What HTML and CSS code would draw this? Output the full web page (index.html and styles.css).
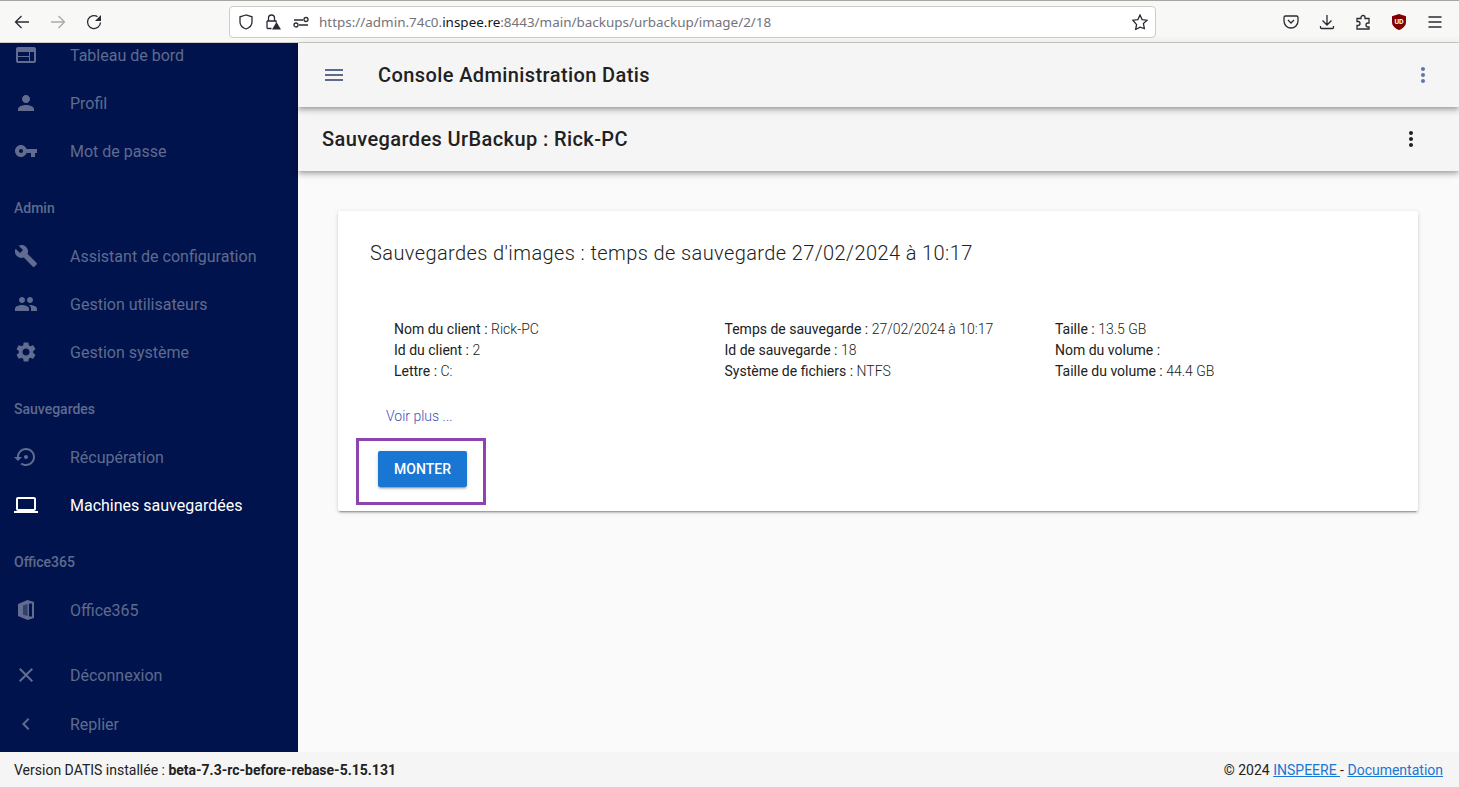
FILE: index.html
```html
<!doctype html>
<html lang="fr">
<head>
  <meta charset="UTF-8">
  <meta name="viewport" content="width=device-width, initial-scale=1">
  <title>Console Administration Datis</title>

  <link rel="stylesheet" href="styles.css">
</head>
<body>

<header class="browser">
  <svg class="bicon" viewBox="0 0 16 16"><path d="M15 8H1.500M7.500 2 1.500 8l6 6"/></svg>
  <svg class="bicon muted" viewBox="0 0 16 16"><path d="M1 8h13.500M8.500 2l6 6-6 6"/></svg>
  <svg class="bicon" viewBox="0 0 16 16"><path d="M14.500 8.500A6.500 6.500 0 1 1 11.500 2.600"/><path class="solid" d="M15 1v6H9z"/></svg>

  <div class="urlbar">
    <svg class="bicon" viewBox="0 0 16 16"><path d="M8 1 2 2.800V8c0 3.400 2.600 5.800 6 7 3.400-1.200 6-3.600 6-7V2.800z"/></svg>
    <svg class="bicon lock" viewBox="0 0 16 16"><path d="M3.500 7V4a3 3 0 0 1 6 0v3M2 7h9v1.500M6.500 14.500H3a1 1 0 0 1-1-1V7"/><path class="solid" d="M11.500 8 16 15.500H7z"/></svg>
    <svg class="bicon tune" viewBox="0 0 16 16"><path d="M1 6h9M6 11h9"/><circle cx="13" cy="5.500" r="2"/><circle cx="3" cy="11" r="2"/></svg>
    <span class="url">https://admin.74c0.<b>inspee.re</b>:8443/main/backups/urbackup/image/2/18</span>
    <svg class="bicon star" viewBox="0 0 16 16"><path d="m8 1 2.100 4.600 5 .6-3.700 3.400 1 4.900L8 13.100l-4.400 2.400 1-4.900L.9 6.200l5-.6z"/></svg>
  </div>

  <svg class="bicon" viewBox="0 0 16 16"><path d="M2.500 2h11A1.500 1.500 0 0 1 15 3.500V7a7 7 0 0 1-14 0V3.500A1.500 1.500 0 0 1 2.500 2zM5 6l3 3 3-3"/></svg>
  <svg class="bicon" viewBox="0 0 16 16"><path d="M8 1v10M3.500 6.500 8 11l4.500-4.500M1.500 12v1.500a1 1 0 0 0 1 1h11a1 1 0 0 0 1-1V12"/></svg>
  <svg class="bicon" viewBox="0 0 16 16"><path d="M6 3.500a2 2 0 1 1 4 0v1h4V9h-1a2 2 0 1 0 0 4h1v2H2v-3.500h1a2 2 0 1 0 0-4H2v-3h4z"/></svg>
  <svg class="bicon ublock" viewBox="0 0 16 16"><path d="M8 0 15 2.200V8c0 3.800-3 6.500-7 8-4-1.500-7-4.200-7-8V2.200z"/><text x="8" y="10">UD</text></svg>
  <svg class="bicon" viewBox="0 0 16 16"><path d="M1.500 3h13M1.500 8h13M1.500 13h13"/></svg>
</header>

<div class="app">
  <nav class="sidebar">
    <div class="sidebar-inner">
      <a class="item"><svg class="micon" viewBox="0 0 24 24"><path d="M20 4H4c-1.100 0-1.990.9-1.990 2L2 18c0 1.100.9 2 2 2h16c1.100 0 2-.9 2-2V6c0-1.100-.9-2-2-2zm-5 14H4v-4h11v4zm0-5H4V9h11v4zm5 5h-4V9h4v9z"/></svg>Tableau de bord</a>
      <a class="item"><svg class="micon" viewBox="0 0 24 24"><path d="M12 12c2.210 0 4-1.790 4-4s-1.790-4-4-4-4 1.790-4 4 1.790 4 4 4zm0 2c-2.670 0-8 1.340-8 4v2h16v-2c0-2.660-5.330-4-8-4z"/></svg>Profil</a>
      <a class="item"><svg class="micon" viewBox="0 0 24 24"><path d="M12.650 10C11.830 7.670 9.610 6 7 6c-3.310 0-6 2.690-6 6s2.690 6 6 6c2.610 0 4.830-1.670 5.650-4H17v4h4v-4h2v-4H12.650zM7 14c-1.100 0-2-.9-2-2s.9-2 2-2 2 .9 2 2-.9 2-2 2z"/></svg>Mot de passe</a>

      <div class="subheader">Admin</div>
      <a class="item"><svg class="micon" viewBox="0 0 24 24"><path d="M22.700 19l-9.100-9.100c.9-2.300.4-5-1.500-6.900-2-2-5-2.400-7.400-1.300L9 6 6 9 1.600 4.700C.4 7.100.9 10.100 2.900 12.100c1.900 1.900 4.600 2.400 6.900 1.500l9.100 9.100c.4.400 1 .4 1.400 0l2.300-2.300c.5-.4.5-1.100.1-1.400z"/></svg>Assistant de configuration</a>
      <a class="item"><svg class="micon" viewBox="0 0 24 24"><path d="M16 11c1.660 0 2.990-1.340 2.990-3S17.660 5 16 5c-1.660 0-3 1.340-3 3s1.340 3 3 3zm-8 0c1.660 0 2.990-1.340 2.990-3S9.660 5 8 5C6.340 5 5 6.340 5 8s1.340 3 3 3zm0 2c-2.330 0-7 1.170-7 3.500V19h14v-2.500c0-2.330-4.670-3.500-7-3.500zm8 0c-.29 0-.62.02-.97.05 1.160.84 1.970 1.970 1.970 3.450V19h6v-2.500c0-2.330-4.670-3.500-7-3.500z"/></svg>Gestion utilisateurs</a>
      <a class="item"><svg class="micon" viewBox="0 0 24 24"><path d="M19.140 12.940c.04-.3.06-.61.06-.94 0-.32-.02-.64-.07-.94l2.030-1.580c.18-.14.23-.41.12-.61l-1.920-3.320c-.12-.22-.37-.29-.59-.22l-2.390.96c-.5-.38-1.030-.7-1.620-.94l-.36-2.540c-.04-.24-.24-.41-.48-.41h-3.840c-.24 0-.43.17-.47.41l-.36 2.540c-.59.24-1.130.57-1.620.94l-2.390-.96c-.22-.08-.47 0-.59.22L2.740 8.870c-.12.21-.08.47.12.61l2.030 1.580c-.05.3-.09.63-.09.94s.02.64.07.94l-2.030 1.580c-.18.14-.23.41-.12.61l1.920 3.320c.12.22.37.29.59.22l2.390-.96c.5.38 1.030.7 1.620.94l.36 2.540c.05.24.24.41.48.41h3.840c.24 0 .44-.17.47-.41l.36-2.540c.59-.24 1.130-.56 1.620-.94l2.390.96c.22.08.47 0 .59-.22l1.920-3.320c.12-.22.07-.47-.12-.61l-2.010-1.580zM12 15.600c-1.980 0-3.600-1.620-3.600-3.600s1.620-3.600 3.600-3.600 3.600 1.620 3.600 3.600-1.620 3.600-3.600 3.600z"/></svg>Gestion système</a>

      <div class="subheader">Sauvegardes</div>
      <a class="item"><svg class="micon" viewBox="0 0 24 24"><path d="M14 12c0-1.100-.9-2-2-2s-2 .9-2 2 .9 2 2 2 2-.9 2-2zm-2-9c-4.970 0-9 4.030-9 9H0l4 4 4-4H5c0-3.870 3.130-7 7-7s7 3.130 7 7-3.130 7-7 7c-1.510 0-2.910-.49-4.060-1.300l-1.420 1.440C8.040 20.300 9.940 21 12 21c4.970 0 9-4.030 9-9s-4.030-9-9-9z"/></svg>Récupération</a>
      <a class="item active"><svg class="micon" viewBox="0 0 24 24"><path d="M20 18c1.100 0 1.990-.9 1.990-2L22 6c0-1.100-.9-2-2-2H4c-1.100 0-2 .9-2 2v10c0 1.100.9 2 2 2H0v2h24v-2h-4zM4 6h16v10H4V6z"/></svg>Machines sauvegardées</a>

      <div class="subheader">Office365</div>
      <a class="item"><svg class="micon" viewBox="0 0 24 24"><path fill-rule="evenodd" d="M13.500 2 4 6v12l9.500 4 6.500-2V4zM15 5.500h3v13h-3zM9 7.500l4.500-1.500v12L9 16.500z"/><path opacity=".5" d="M9 7.500l4.500-1.500v12L9 16.500z"/></svg>Office365</a>

      <a class="item logout"><svg class="micon" viewBox="0 0 24 24"><path d="M19 6.410L17.590 5 12 10.590 6.410 5 5 6.410 10.590 12 5 17.590 6.410 19 12 13.410 17.590 19 19 17.590 13.410 12z"/></svg>Déconnexion</a>
      <a class="item fold"><svg class="micon" viewBox="0 0 24 24"><path d="M15.410 7.410L14 6l-6 6 6 6 1.410-1.410L10.830 12z"/></svg>Replier</a>
    </div>
  </nav>

  <main class="content">
    <div class="toolbar">
      <svg class="micon menu" viewBox="0 0 24 24"><path d="M3 18h18v-2H3v2zm0-5h18v-2H3v2zm0-7v2h18V6H3z"/></svg>
      <h1>Console Administration Datis</h1>
      <svg class="micon more" viewBox="0 0 24 24"><path d="M12 8c1.100 0 2-.9 2-2s-.9-2-2-2-2 .9-2 2 .9 2 2 2zm0 2c-1.100 0-2 .9-2 2s.9 2 2 2 2-.9 2-2-.9-2-2-2zm0 6c-1.100 0-2 .9-2 2s.9 2 2 2 2-.9 2-2-.9-2-2-2z"/></svg>
    </div>

    <div class="pagehead">
      <h2>Sauvegardes UrBackup : Rick-PC</h2>
      <svg class="micon more" viewBox="0 0 24 24"><path d="M12 8c1.100 0 2-.9 2-2s-.9-2-2-2-2 .9-2 2 .9 2 2 2zm0 2c-1.100 0-2 .9-2 2s.9 2 2 2 2-.9 2-2-.9-2-2-2zm0 6c-1.100 0-2 .9-2 2s.9 2 2 2 2-.9 2-2-.9-2-2-2z"/></svg>
    </div>

    <section class="card">
      <h3>Sauvegardes d'images : temps de sauvegarde 27/02/2024 à 10:17</h3>

      <div class="infos">
        <div>
          <p>Nom du client : <span>Rick-PC</span></p>
          <p>Id du client : <span>2</span></p>
          <p>Lettre : <span>C:</span></p>
        </div>
        <div>
          <p>Temps de sauvegarde : <span>27/02/2024 à 10:17</span></p>
          <p>Id de sauvegarde : <span>18</span></p>
          <p>Système de fichiers : <span>NTFS</span></p>
        </div>
        <div>
          <p>Taille : <span>13.5 GB</span></p>
          <p>Nom du volume : <span></span></p>
          <p>Taille du volume : <span>44.4 GB</span></p>
        </div>
      </div>

      <a class="more-link">Voir plus ...</a>

      <div class="highlight">
        <button type="button">MONTER</button>
      </div>
    </section>
  </main>
</div>

<footer class="footer">
  <div>Version DATIS installée : <b>beta-7.3-rc-before-rebase-5.15.131</b></div>
  <div>© 2024 <a>INSPEERE </a> - <a>Documentation</a></div>
</footer>

</body>
</html>
```

FILE: styles.css
```css
* {
    margin: 0;
    padding: 0;
    box-sizing: border-box;
}

html, body {
    height: 100%;
}

body {
    display: flex;
    flex-direction: column;
    overflow: hidden;
    font-family: Roboto, sans-serif;
    font-size: 14px;
    color: #212121;
    background-color: #fafafa;
}

/* browser chrome */

.browser {
    height: 43px;
    flex: none;
    display: flex;
    align-items: center;
    gap: 20px;
    padding: 1px 16px 0 14px;
    background-color: #f8f8f7;
    border-top: 1px solid #a9a5a2;
    border-bottom: 1px solid #cfcdca;
}

.bicon {
    width: 16px;
    height: 16px;
    flex: none;
    fill: none;
    stroke: #2b2a33;
    stroke-width: 1.3;
}

.bicon.muted {
    stroke: #a9a9ad;
}

.bicon .solid {
    fill: #2b2a33;
    stroke: none;
}

.bicon.ublock path {
    fill: #800000;
    stroke: none;
}

.bicon.ublock text {
    fill: #fff;
    stroke: none;
    font-size: 7px;
    font-weight: 700;
    text-anchor: middle;
}

.urlbar {
    width: 927px;
    height: 32px;
    margin: 0 107px;
    flex: none;
    display: flex;
    align-items: center;
    padding: 0 7px 0 8px;
    background-color: #fff;
    border: 1px solid #cfcdca;
    border-radius: 4px;
}

.urlbar .lock {
    margin-left: 11px;
}

.urlbar .tune {
    margin-left: 12px;
}

.url {
    flex: 1;
    margin-left: 10px;
    font-family: "Noto Sans", sans-serif;
    font-size: 13.45px;
    color: #73737a;
}

.url b {
    font-weight: 400;
    color: #15141a;
}

/* app layout */

.app {
    flex: 1;
    min-height: 0;
    display: flex;
}

.sidebar {
    width: 298px;
    flex: none;
    overflow: hidden;
    background-color: #00134c;
    color: rgba(255, 255, 255, .38);
}

.sidebar-inner {
    margin-top: -12px;
}

.item {
    height: 48px;
    display: flex;
    align-items: center;
    gap: 32px;
    padding-left: 14px;
    font-size: 16px;
    white-space: nowrap;
}

.item.active {
    color: #fff;
}

.item.logout {
    margin-top: 17px;
}

.item.fold {
    margin-top: 1px;
}

.subheader {
    height: 48px;
    margin-top: 9px;
    display: flex;
    align-items: center;
    padding-left: 14px;
    font-weight: 500;
}

.micon {
    width: 24px;
    height: 24px;
    flex: none;
    fill: currentColor;
}

/* main part */

.content {
    flex: 1;
    min-width: 0;
    position: relative;
}

.toolbar, .pagehead {
    height: 64px;
    display: flex;
    align-items: center;
    background-color: #f5f5f5;
    box-shadow: 0 2px 4px -1px rgba(0, 0, 0, .2), 0 4px 5px 0 rgba(0, 0, 0, .14), 0 1px 10px 0 rgba(0, 0, 0, .12);
}

.toolbar {
    position: relative;
    z-index: 2;
    padding: 0 24px;
}

.pagehead {
    position: relative;
    z-index: 1;
    padding: 0 36px 0 24px;
}

.toolbar .menu {
    color: #5f6a8a;
    margin-right: 32px;
}

.toolbar .more {
    color: #5f77a8;
    margin-left: auto;
}

.pagehead .more {
    color: #212121;
    margin-left: auto;
}

h1, h2 {
    font-size: 20px;
    font-weight: 500;
    letter-spacing: .4px;
}

.card {
    margin: 40px 41px 0 40px;
    height: 300px;
    padding: 30px 32px 0;
    background-color: #fff;
    border-radius: 2px;
    box-shadow: 0 2px 2px 0 rgba(0, 0, 0, .14), 0 3px 1px -2px rgba(0, 0, 0, .2), 0 1px 5px 0 rgba(0, 0, 0, .12);
}

.card h3 {
    font-size: 20px;
    font-weight: 300;
    line-height: 24px;
    letter-spacing: .4px;
}

.infos {
    display: grid;
    grid-template-columns: repeat(3, 330.5px);
    margin-top: 54px;
    padding-left: 24px;
    line-height: 21px;
}

.infos span {
    font-weight: 300;
}

.more-link {
    display: block;
    margin: 24px 0 0 16px;
    font-weight: 300;
    line-height: 21px;
    color: #3f51b5;
}

.highlight {
    width: 130px;
    height: 67px;
    margin: 11px 0 0 -14px;
    padding: 10px 0 0 19px;
    border: 3px solid #8e44ad;
}

.highlight button {
    width: 89px;
    height: 36px;
    border: 0;
    border-radius: 2px;
    font-family: Roboto, sans-serif;
    font-size: 14px;
    font-weight: 500;
    color: #fff;
    background-color: #1976d2;
    box-shadow: 0 3px 1px -2px rgba(0, 0, 0, .2), 0 2px 2px 0 rgba(0, 0, 0, .14), 0 1px 5px 0 rgba(0, 0, 0, .12);
}

/* footer */

.footer {
    height: 35px;
    flex: none;
    display: flex;
    align-items: center;
    justify-content: space-between;
    padding: 0 16px 0 14px;
    background-color: #f5f5f5;
}

.footer b {
    font-weight: 700;
}

.footer a {
    color: #1976d2;
    text-decoration: underline;
}
```
